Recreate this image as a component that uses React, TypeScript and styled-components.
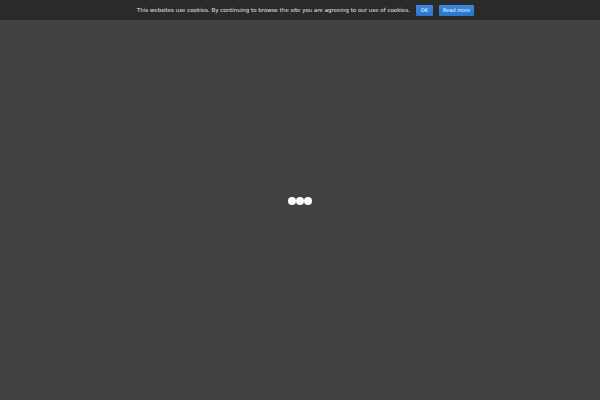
import styled, { createGlobalStyle } from "styled-components";

const GlobalStyle = createGlobalStyle`
  html, body {
    margin: 0;
    padding: 0;
    height: 100%;
    background: #424242;
  }
  #root {
    height: 100%;
  }
`;

const Page = styled.div`
  height: 100vh;
  display: flex;
  flex-direction: column;
  font-family: "DejaVu Sans", Verdana, sans-serif;
`;

const CookieBar = styled.div`
  height: 20px;
  flex-shrink: 0;
  background: #2a2a2a;
  display: flex;
  align-items: center;
  justify-content: center;
  gap: 6px;
  padding-left: 11px;
`;

const Message = styled.span`
  color: #e6e6e6;
  font-size: 5.5px;
  margin-right: 0;
`;

const BarButton = styled.button<{ $wide?: boolean }>`
  height: 11px;
  padding: 0 ${(p) => (p.$wide ? "4px" : "5px")};
  border: none;
  border-radius: 1px;
  background: linear-gradient(#3a8ae0, #2a74c9);
  color: #ffffff;
  font-family: inherit;
  font-size: 5px;
  line-height: 11px;
  cursor: pointer;
`;

const Stage = styled.div`
  flex: 1;
  display: flex;
  align-items: center;
  justify-content: center;
  padding-bottom: 19px;
`;

const Loader = styled.div`
  display: flex;
`;

const Dot = styled.span`
  width: 8px;
  height: 8px;
  border-radius: 50%;
  background: #ffffff;
`;

export default function App() {
  return (
    <Page>
      <GlobalStyle />
      <CookieBar>
        <Message>
          This websites use cookies. By continuing to browse the site you are
          agreeing to our use of cookies.
        </Message>
        <BarButton>OK</BarButton>
        <BarButton $wide>Read more</BarButton>
      </CookieBar>
      <Stage>
        <Loader>
          <Dot />
          <Dot />
          <Dot />
        </Loader>
      </Stage>
    </Page>
  );
}
